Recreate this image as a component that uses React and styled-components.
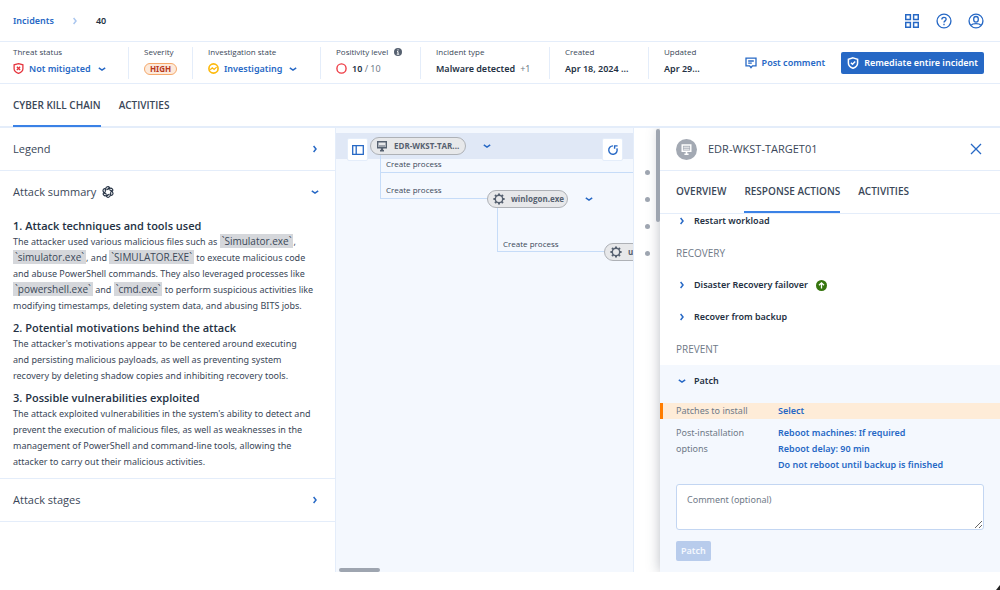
import React from "react";
import styled, { createGlobalStyle, css } from "styled-components";

const color = {
  text: "#3a4758",
  strong: "#243143",
  muted: "#6f7a88",
  blue: "#2668c5",
  accent: "#3b82e6",
  line: "#e4edfa",
  canvas: "#f4f8fe",
  edge: "#c6dcf8",
  grey: "#9ea5b0",
};

const GlobalStyle = createGlobalStyle`
  *, *::before, *::after { box-sizing: border-box; }
  body {
    margin: 0;
    background: #fff;
    color: ${color.text};
    font: 9px/16px "Noto Sans", "Open Sans", sans-serif;
  }
  button, textarea { font: inherit; color: inherit; }
  button { margin: 0; padding: 0; border: 0; background: none; cursor: pointer; text-align: left; }
  a { color: ${color.blue}; text-decoration: none; }
  h1, h2, h3, p, dl, dt, dd { margin: 0; font: inherit; }
  svg { display: block; flex: none; }
`;

const titleFont = css`
  font-family: "Open Sans", "Noto Sans", sans-serif;
  font-size: 11px;
`;

const capsFont = css`
  font-family: "Open Sans", "Noto Sans", sans-serif;
  font-size: 10px;
  text-transform: uppercase;
`;

const smallFont = css`
  font-family: "Open Sans", "Noto Sans", sans-serif;
  font-size: 8px;
  line-height: 12px;
`;

const Page = styled.div`
  display: flex;
  flex-direction: column;
  min-height: 100vh;
  padding-bottom: 18px;
  position: relative;
`;

const TopBar = styled.header`
  display: flex;
  align-items: center;
  justify-content: space-between;
  height: 42px;
  padding: 0 16px 0 13px;
  border-bottom: 1px solid ${color.line};
`;

const Breadcrumbs = styled.nav`
  display: flex;
  align-items: center;
  gap: 17px;
  font-weight: 600;
  color: ${color.strong};
`;

const ToolIcons = styled.div`
  display: flex;
  gap: 16px;
  color: ${color.blue};
`;

const InfoBar = styled.section`
  display: flex;
  align-items: center;
  justify-content: space-between;
  height: 42px;
  padding-right: 16px;
  border-bottom: 1px solid ${color.line};
`;

const Facts = styled.dl`
  display: grid;
  grid-template-columns: 128px 64px 128px 100px 129px 99px auto;
`;

const Fact = styled.div`
  height: 32px;
  padding-left: 15px;
  border-left: 1px solid ${color.line};
  white-space: nowrap;
  &:first-child { padding-left: 13px; border-left: 0; }
`;

const FactLabel = styled.dt`
  display: flex;
  align-items: center;
  gap: 6px;
  height: 11px;
  margin-bottom: 3px;
  ${smallFont}
`;

const FactValue = styled.dd`
  display: flex;
  align-items: center;
  gap: 5px;
  height: 16px;
  font-weight: 600;
  color: ${color.strong};
  span { font-weight: 400; color: ${color.muted}; }
`;

const StateButton = styled.button`
  display: flex;
  align-items: center;
  gap: 5px;
  font-weight: 600;
  color: ${color.blue};
  svg:last-child { margin-left: 2px; }
`;

const Badge = styled.b`
  padding: 0 5px;
  border: 1px solid #f5a86a;
  border-radius: 6px;
  background: #fdeadb;
  color: #b8391b;
  font-size: 8px;
  line-height: 10px;
  font-weight: 700;
`;

const Actions = styled.div`
  display: flex;
  align-items: center;
  gap: 16px;
`;

const ActionButton = styled.button`
  display: flex;
  align-items: center;
  gap: 5px;
  height: 22px;
  font-weight: 600;
  white-space: nowrap;
  color: ${color.blue};
  ${({ $primary }) =>
    $primary &&
    css`
      padding: 0 6px;
      border-radius: 2px;
      background: ${color.blue};
      color: #fff;
    `}
`;

const Tabs = styled.nav`
  display: flex;
  gap: 18px;
  height: ${({ $tall }) => ($tall ? 44 : 43)}px;
  padding-left: ${({ $inset }) => $inset}px;
  border-bottom: ${({ $tall }) => ($tall ? 2 : 1)}px solid ${color.line};
  button { height: ${({ $tall }) => ($tall ? 43 : 42)}px; }
`;

const Tab = styled.button`
  border-bottom: 2px solid ${({ $active }) => ($active ? color.accent : "transparent")};
  font-weight: 600;
  color: ${color.text};
  ${capsFont}
`;

const Main = styled.main`
  display: grid;
  grid-template-columns: 336px minmax(0, 1fr) 340px;
  flex: 1;
  overflow: hidden;
`;

const Side = styled.aside`
  border-right: 1px solid ${color.line};
`;

const SectionToggle = styled.button`
  display: flex;
  align-items: center;
  gap: 6px;
  width: 100%;
  height: ${({ $open }) => ($open ? 42 : 43)}px;
  padding: 0 16px 0 13px;
  border-bottom: ${({ $open }) => ($open ? 0 : 1)}px solid ${color.line};
  ${titleFont}
  svg:last-child { margin-left: auto; }
`;

const Summary = styled.div`
  padding: 5px 21px 8px 13px;
  border-bottom: 1px solid ${color.line};
`;

const SummaryTitle = styled.h3`
  ${titleFont}
  font-weight: 600;
  color: ${color.strong};
  p + & { margin-top: 6px; }
`;

const Code = styled.code`
  padding: 0 2px;
  background: #d5d7db;
  font: 10px/12px "Open Sans", "Noto Sans", sans-serif;
`;

const Graph = styled.section`
  display: flex;
  min-width: 0;
`;

const Canvas = styled.div`
  position: relative;
  flex: 1;
  overflow: hidden;
  background: ${color.canvas};
  border-right: 1px solid ${color.line};
`;

const Band = styled.div`
  height: 26px;
  margin-top: 5px;
  background: #e0e8f6;
`;

const Edge = styled.div`
  position: absolute;
  left: ${({ $x }) => $x}px;
  top: ${({ $y }) => $y}px;
  width: ${({ $w }) => $w}px;
  height: ${({ $h }) => $h}px;
  border: solid ${color.edge};
  border-width: 0 0 1px 1px;
`;

const EdgeLabel = styled.span`
  position: absolute;
  left: ${({ $x }) => $x}px;
  top: ${({ $y }) => $y}px;
  white-space: nowrap;
  ${smallFont}
`;

const Node = styled.button`
  position: absolute;
  left: ${({ $x }) => $x}px;
  top: ${({ $y }) => $y}px;
  display: flex;
  align-items: center;
  gap: 6px;
  width: ${({ $w }) => $w}px;
  height: 18px;
  padding: 0 5px;
  border: 1px solid #aeb1b6;
  border-radius: 9px;
  background: #e7e8ea;
  color: #566170;
  font-weight: 700;
  white-space: nowrap;
  ${smallFont}
`;

const FloatButton = styled.button`
  position: absolute;
  top: 10px;
  left: ${({ $x }) => $x}px;
  right: ${({ $right }) => $right}px;
  display: grid;
  place-items: center;
  width: 21px;
  height: 23px;
  border: 1px solid ${color.line};
  border-radius: 2px;
  background: #fff;
  color: ${color.blue};
`;

const Expand = styled.button`
  position: absolute;
  left: ${({ $x }) => $x}px;
  top: ${({ $y }) => $y}px;
  color: ${color.blue};
`;

const ScrollThumb = styled.div`
  position: absolute;
  border-radius: 2px;
  background: ${color.grey};
  ${({ $vertical }) =>
    $vertical
      ? css`top: 1px; right: 0; width: 4px; height: 93px; z-index: 1;`
      : css`bottom: 0; left: 3px; width: 41px; height: 4px;`}
`;

const Gutter = styled.div`
  position: relative;
  display: flex;
  flex-direction: column;
  gap: 22px;
  width: 26px;
  padding: 42px 0 0 11px;
`;

const Dot = styled.i`
  width: 5px;
  height: 5px;
  border-radius: 50%;
  background: ${color.grey};
`;

const Details = styled.aside`
  display: flex;
  flex-direction: column;
  background: #fff;
  box-shadow: 0 0 12px rgba(60, 70, 90, 0.35);
`;

const DetailsHead = styled.header`
  display: flex;
  align-items: center;
  gap: 11px;
  height: 43px;
  padding: 0 18px 0 16px;
  border-bottom: 1px solid ${color.line};
  ${titleFont}
  button { margin-left: auto; color: ${color.blue}; }
`;

const Group = styled.h3`
  padding: 0 16px;
  line-height: 32px;
  color: ${color.muted};
  ${capsFont}
`;

const ActionRow = styled.button`
  display: flex;
  align-items: center;
  gap: 8px;
  width: 100%;
  height: ${({ $cut }) => ($cut ? 23 : 32)}px;
  padding: 0 18px ${({ $cut }) => ($cut ? 9 : 0)}px;
  font-weight: 600;
  color: ${color.strong};
`;

const PatchSection = styled.section`
  flex: 1;
  background: ${color.canvas};
`;

const Option = styled.div`
  display: grid;
  grid-template-columns: 102px 1fr;
  padding: 0 16px;
  color: ${color.muted};
  a { display: block; font-weight: 600; }
  span { padding-right: 20px; }
  ${({ $warn }) =>
    $warn &&
    css`
      margin: 6px 0;
      padding-left: 13px;
      border-left: 3px solid #ff7d00;
      background: #feecd8;
    `}
`;

const Form = styled.form`
  padding: 11px 16px;
`;

const Comment = styled.textarea`
  display: block;
  width: 100%;
  height: 46px;
  padding: 7px 10px;
  border: 1px solid #c3d6f2;
  border-radius: 3px;
  background: #fff;
  resize: vertical;
  &::placeholder { color: ${color.muted}; opacity: 1; }
`;

const Submit = styled.button`
  height: 20px;
  margin-top: 11px;
  padding: 0 5px;
  border-radius: 2px;
  background: #b8ccec;
  color: #f4f8fe;
  font-weight: 600;
`;

const WindowGrip = styled.svg`
  position: absolute;
  right: 0;
  bottom: 0;
`;

const Icon = ({ size = 12, children, width = 1.3, ...rest }) => (
  <svg
    width={size}
    height={size}
    viewBox="0 0 12 12"
    fill="none"
    stroke="currentColor"
    strokeWidth={width}
    aria-hidden="true"
    {...rest}
  >
    {children}
  </svg>
);

const Chevron = ({ dir = "down", tint = color.blue }) => (
  <svg width="8" height="8" viewBox="0 0 8 8" fill="none" stroke={tint} strokeWidth="1.5" aria-hidden="true">
    <path d={dir === "down" ? "M.8 2.8 L4 5 L7.2 2.8" : "M2.6 1 L5 4 L2.6 7"} />
  </svg>
);

const Monitor = ({ size = 12 }) => (
  <Icon size={size} width={1.4}>
    <path d="M1.7 1.7h8.6v6H1.7zM4 10.7h4" />
    <path d="M6 8v2.4" strokeWidth="2.4" />
    <path d="M3 6h6" strokeWidth="1" />
  </Icon>
);

const Gear = () => (
  <Icon size={12} width={1.4}>
    <circle cx="6" cy="6" r="3.7" />
    {[0, 45, 90, 135, 180, 225, 270, 315].map((a) => (
      <path key={a} transform={`rotate(${a} 6 6)`} d="M6 .4v1.8" strokeWidth="2" />
    ))}
  </Icon>
);

const AiKnot = () => (
  <Icon size={12} width={1.1} stroke={color.strong}>
    {[0, 60, 120, 180, 240, 300].map((a) => (
      <path key={a} transform={`rotate(${a} 6 6)`} d="M3.8 4.5V2.7a2 2 0 0 1 3.8-.9L4.800 3.700" />
    ))}
  </Icon>
);

const ShieldCheck = () => (
  <Icon width={1.5}>
    <path d="M6 .9L10.6 2.2V6c0 2.4-1.7 4.2-4.6 5.3C3.1 10.2 1.4 8.4 1.4 6V2.2z" />
    <path d="M3.9 5.8l1.6 1.5 2.7-2.8" />
  </Icon>
);

export default function App() {
  return (
    <>
      <GlobalStyle />
      <Page>
        <TopBar>
          <Breadcrumbs aria-label="Breadcrumb">
            <a href="#incidents">Incidents</a>
            <Chevron dir="right" tint="#aac6ef" />
            <span>40</span>
          </Breadcrumbs>
          <ToolIcons>
            <button aria-label="Applications">
              <Icon size={16} width={1.1}>
                <path d="M1.3 1.3h3.5v3.5H1.3zM7.2 1.3h3.5v3.5H7.2zM1.3 7.2h3.5v3.5H1.3zM7.2 7.2h3.5v3.5H7.2z" />
              </Icon>
            </button>
            <button aria-label="Help">
              <Icon size={16} width={1}>
                <circle cx="6" cy="6" r="5.2" />
                <path d="M4.4 4.9C4.4 2.7 7.6 2.8 7.6 4.7 7.6 5.9 6 5.9 6 7.2M6 8v1.2" />
              </Icon>
            </button>
            <button aria-label="Account">
              <Icon size={16} width={1}>
                <circle cx="6" cy="6" r="5.2" />
                <rect x="4.3" y="2.6" width="3.4" height="4.2" rx="1.7" />
                <path d="M2.3 9.2C3.3 8 4.3 8 6 8s2.7 0 3.7 1.2" />
              </Icon>
            </button>
          </ToolIcons>
        </TopBar>

        <InfoBar>
          <Facts>
            <Fact>
              <FactLabel>Threat status</FactLabel>
              <FactValue>
                <StateButton>
                  <Icon size={11} stroke="#e5343d" width={1.4}>
                    <path d="M6 .8L10.8 2v4.2c0 2.3-1.8 4-4.8 5.1C3 10.2 1.2 8.5 1.2 6.2V2z" />
                    <path d="M4.2 4.1l3.6 3.6M7.8 4.1L4.2 7.7" />
                  </Icon>
                  Not mitigated
                  <Chevron />
                </StateButton>
              </FactValue>
            </Fact>
            <Fact>
              <FactLabel>Severity</FactLabel>
              <FactValue>
                <Badge>HIGH</Badge>
              </FactValue>
            </Fact>
            <Fact>
              <FactLabel>Investigation state</FactLabel>
              <FactValue>
                <StateButton>
                  <Icon size={11} stroke="#fdb90c" width={1.8}>
                    <circle cx="6" cy="6" r="5" />
                    <path d="M2.4 7.4L4.7 5.3l2 1.7 2.7-2.5" strokeWidth="1.4" />
                  </Icon>
                  Investigating
                  <Chevron />
                </StateButton>
              </FactValue>
            </Fact>
            <Fact>
              <FactLabel>
                Positivity level
                <svg width="8" height="8" viewBox="0 0 8 8" aria-hidden="true">
                  <circle cx="4" cy="4" r="4" fill="#566170" />
                  <path d="M4 1.3v1.2M3 3.6h1v2.3M2.8 6.2h2.4" stroke="#fff" fill="none" />
                </svg>
              </FactLabel>
              <FactValue>
                <Icon size={11} stroke="#ee3a43" width={1.5}>
                  <circle cx="6" cy="6" r="5" />
                </Icon>
                <div>
                  10 <span>/ 10</span>
                </div>
              </FactValue>
            </Fact>
            <Fact>
              <FactLabel>Incident type</FactLabel>
              <FactValue>
                Malware detected <span>+1</span>
              </FactValue>
            </Fact>
            <Fact>
              <FactLabel>Created</FactLabel>
              <FactValue>Apr 18, 2024 ...</FactValue>
            </Fact>
            <Fact>
              <FactLabel>Updated</FactLabel>
              <FactValue>Apr 29...</FactValue>
            </Fact>
          </Facts>
          <Actions>
            <ActionButton>
              <Icon>
                <path d="M1 1.2h10v7.6H7.4L6 10.6 4.6 8.8H1zM3.2 4h5.6M3.2 6.2h3.6" />
              </Icon>
              Post comment
            </ActionButton>
            <ActionButton $primary>
              <ShieldCheck />
              Remediate entire incident
            </ActionButton>
          </Actions>
        </InfoBar>

        <Tabs $tall $inset={13} aria-label="Incident views">
          <Tab $active>Cyber kill chain</Tab>
          <Tab>Activities</Tab>
        </Tabs>

        <Main>
          <Side>
            <SectionToggle>
              Legend
              <Chevron dir="right" />
            </SectionToggle>
            <SectionToggle $open aria-expanded="true">
              Attack summary
              <AiKnot />
              <Chevron />
            </SectionToggle>
            <Summary>
              <SummaryTitle>1. Attack techniques and tools used</SummaryTitle>
              <p>
                The attacker used various malicious files such as <Code>`Simulator.exe`</Code>,{" "}
                <Code>`simulator.exe`</Code>, and <Code>`SIMULATOR.EXE`</Code> to execute malicious code and abuse
                PowerShell commands. They also leveraged processes like <Code>`powershell.exe`</Code> and{" "}
                <Code>`cmd.exe`</Code> to perform suspicious activities like modifying timestamps, deleting system
                data, and abusing BITS jobs.
              </p>
              <SummaryTitle>2. Potential motivations behind the attack</SummaryTitle>
              <p>
                The attacker's motivations appear to be centered around executing and persisting malicious payloads,
                as well as preventing system recovery by deleting shadow copies and inhibiting recovery tools.
              </p>
              <SummaryTitle>3. Possible vulnerabilities exploited</SummaryTitle>
              <p>
                The attack exploited vulnerabilities in the system's ability to detect and prevent the execution of
                malicious files, as well as weaknesses in the management of PowerShell and command-line tools,
                allowing the attacker to carry out their malicious activities.
              </p>
            </Summary>
            <SectionToggle>
              Attack stages
              <Chevron dir="right" />
            </SectionToggle>
          </Side>

          <Graph>
            <Canvas>
              <Band />
              <Edge $x={44} $y={26} $w={300} $h={19} />
              <Edge $x={44} $y={26} $w={108} $h={45} />
              <Edge $x={161} $y={80} $w={108} $h={44} />
              <EdgeLabel $x={50} $y={30}>Create process</EdgeLabel>
              <EdgeLabel $x={50} $y={56}>Create process</EdgeLabel>
              <EdgeLabel $x={167} $y={110}>Create process</EdgeLabel>
              <Node $x={34} $y={9} $w={96}>
                <Monitor />
                EDR-WKST-TAR...
              </Node>
              <Node $x={151} $y={62} $w={81}>
                <Gear />
                winlogon.exe
              </Node>
              <Node $x={268} $y={115} $w={81}>
                <Gear />
                userinit.exe
              </Node>
              <Expand $x={147} $y={14} aria-label="Expand EDR-WKST-TARGET01">
                <Chevron />
              </Expand>
              <Expand $x={249} $y={67} aria-label="Expand winlogon.exe">
                <Chevron />
              </Expand>
              <FloatButton $x={11} aria-label="Toggle side panel">
                <Icon width={1.3}>
                  <path d="M.7 1.7h10.600v8.600H.7zM4.200 1.700v8.600" />
                </Icon>
              </FloatButton>
              <FloatButton $right={10} aria-label="Reload graph">
                <Icon width={1.4}>
                  <path d="M6 1.900A4.200 4.200 0 1 0 9.800 4.400" />
                  <path d="M7.600 4.800V1.900h3" />
                </Icon>
              </FloatButton>
              <ScrollThumb />
            </Canvas>
            <Gutter>
              <Dot />
              <Dot />
              <Dot />
              <Dot />
              <ScrollThumb $vertical />
            </Gutter>
          </Graph>

          <Details>
            <DetailsHead>
              <svg width="21" height="21" viewBox="0 0 21 21" aria-hidden="true">
                <circle cx="10.5" cy="10.5" r="10.5" fill="#a3a9b3" />
                <path d="M6.2 6h8.6v6.3H6.2z" fill="none" stroke="#fff" strokeWidth="1.4" />
                <path d="M7.5 8.2h6M7.5 10.2h6" stroke="#fff" strokeWidth="0.9" />
                <path d="M10.5 12.5v2.2M8.4 15.2h4.2" fill="none" stroke="#fff" strokeWidth="1.6" />
              </svg>
              <h2>EDR-WKST-TARGET01</h2>
              <button aria-label="Close">
                <Icon width={1.3}>
                  <path d="M1 1l10 10M11 1L1 11" />
                </Icon>
              </button>
            </DetailsHead>
            <Tabs $inset={16} aria-label="Workload details">
              <Tab>Overview</Tab>
              <Tab $active>Response actions</Tab>
              <Tab>Activities</Tab>
            </Tabs>
            <ActionRow $cut>
              <Chevron dir="right" />
              Restart workload
            </ActionRow>
            <Group>Recovery</Group>
            <ActionRow>
              <Chevron dir="right" />
              Disaster Recovery failover
              <svg width="11" height="11" viewBox="0 0 11 11" aria-hidden="true">
                <circle cx="5.5" cy="5.5" r="5.5" fill="#36750e" />
                <path d="M5.5 8.6V3M3 5.3l2.5-2.5L8 5.3" fill="none" stroke="#fff" strokeWidth="1.3" />
              </svg>
            </ActionRow>
            <ActionRow>
              <Chevron dir="right" />
              Recover from backup
            </ActionRow>
            <Group>Prevent</Group>
            <PatchSection>
              <ActionRow aria-expanded="true">
                <Chevron />
                Patch
              </ActionRow>
              <Option $warn>
                <span>Patches to install</span>
                <a href="#select">Select</a>
              </Option>
              <Option>
                <span>Post-installation options</span>
                <div>
                  <a href="#reboot">Reboot machines: If required</a>
                  <a href="#delay">Reboot delay: 90 min</a>
                  <a href="#backup">Do not reboot until backup is finished</a>
                </div>
              </Option>
              <Form>
                <Comment aria-label="Comment" placeholder="Comment (optional)" />
                <Submit type="button" disabled>
                  Patch
                </Submit>
              </Form>
            </PatchSection>
          </Details>
        </Main>
        <WindowGrip width="4" height="5" viewBox="0 0 4 5" aria-hidden="true">
          <path d="M4 0v5H0z" fill="#222" />
        </WindowGrip>
      </Page>
    </>
  );
}
